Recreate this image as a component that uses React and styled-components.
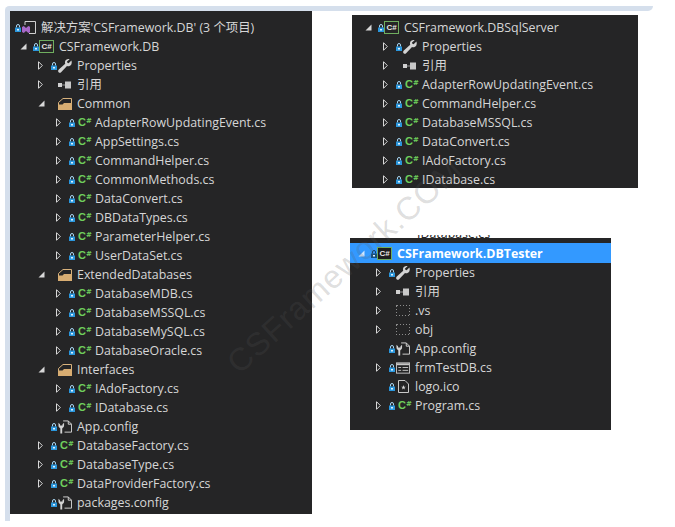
import React from "react";
import styled, { createGlobalStyle } from "styled-components";

const GlobalStyle = createGlobalStyle`
  html, body {
    margin: 0;
    padding: 0;
    background: #ffffff;
  }
`;

const Page = styled.div`
  position: relative;
  width: 675px;
  height: 527px;
  padding: 6px 0 0 5px;
  box-sizing: border-box;
  overflow: hidden;
  font-family: "Open Sans", "Noto Sans CJK SC", sans-serif;
`;

const TopBar = styled.div`
  width: 648px;
  height: 5px;
  background: #d5dfec;
  border-radius: 5px 0 6px 0;
`;

const Body = styled.div`
  display: flex;
  align-items: flex-start;
  height: 510px;
  border-left: 5px solid #d5dfec;
`;

const Watermark = styled.div`
  position: absolute;
  left: 232px;
  top: 347px;
  font-family: "Liberation Sans", sans-serif;
  font-size: 32px;
  line-height: 40px;
  letter-spacing: 1px;
  white-space: nowrap;
  color: rgba(90, 90, 90, 0.21);
  pointer-events: none;
  transform-origin: 0 50%;
  transform: rotate(-42deg);
`;

const Panel = styled.div`
  position: relative;
  width: ${(p) => p.$width}px;
  height: ${(p) => p.$height}px;
  padding-top: ${(p) => p.$top}px;
  box-sizing: border-box;
  background: #252526;
  overflow: hidden;
`;

const RightColumn = styled.div`
  display: flex;
  flex-direction: column;
  align-items: flex-start;
  margin-left: 38px;
`;

const TopPanelWrap = styled.div`
  margin: 4px 0 47px 2px;
`;

const CutLabel = styled.div`
  height: 3px;
  width: 261px;
  padding-left: 67px;
  box-sizing: border-box;
  overflow: hidden;
  font-size: 12.4px;
  line-height: 3px;
  color: #222;
  display: flex;
  align-items: flex-end;
`;

const CutText = styled.span`
  display: block;
  transform: translateY(-3px);
`;

const Row = styled.div`
  display: flex;
  align-items: center;
  height: 19px;
  padding-left: ${(p) => p.$depth * 18 + p.$offset}px;
  background: ${(p) => (p.$selected ? "#3399ff" : "transparent")};
  box-shadow: ${(p) => (p.$selected ? "0 -1px 0 #3399ff" : "none")};
`;

const Expander = styled.span`
  display: flex;
  align-items: center;
  flex: none;
  width: 13px;
  margin-left: -13px;
`;

const LockSlot = styled.span`
  display: flex;
  flex: none;
  width: 7px;
`;

const IconSlot = styled.span`
  display: flex;
  align-items: center;
  justify-content: ${(p) => (p.$wide ? "flex-start" : "center")};
  flex: none;
  width: 14px;
  height: 15px;
`;

const Label = styled.span`
  margin-left: 5px;
  font-size: 12.4px;
  font-weight: ${(p) => (p.$selected ? 700 : 400)};
  line-height: 19px;
  white-space: nowrap;
  color: ${(p) => (p.$selected ? "#ffffff" : "#d6d6d6")};
`;

const CsGlyph = styled.span`
  display: flex;
  align-items: flex-start;
  font-family: "Liberation Sans", sans-serif;
  font-size: 11px;
  font-weight: 700;
  line-height: 11px;
  color: #6fcf5d;
  padding-left: 2px;
`;

const CsHash = styled.span`
  font-family: "DejaVu Sans", sans-serif;
  font-size: 7px;
  line-height: 8px;
`;

const ProjectBox = styled.span`
  display: flex;
  align-items: center;
  justify-content: center;
  flex: none;
  box-sizing: border-box;
  width: 15px;
  height: 13px;
  margin-left: -1px;
  border: 1px solid #6fae5f;
  background: ${(p) => (p.$selected ? "#1e1e1e" : "#252526")};
  font-family: "Liberation Sans", sans-serif;
  font-size: 8px;
  font-weight: 700;
  line-height: 10px;
  color: #e8e8e8;
`;

const Lock = ({ selected }) => (
  <svg width="6" height="8" viewBox="0 0 6 8">
    <path d="M1.5 3.5V2a1.5 1.5 0 0 1 3 0v1.5" fill="none" stroke={selected ? "#14405f" : "#a8d6f2"} strokeWidth="1" />
    <rect x="0" y="3.5" width="6" height="4.5" fill={selected ? "#14507c" : "#2a96dc"} />
    <rect x="2" y="5" width="2" height="1.5" fill="#dff1fc" />
  </svg>
);

const Closed = () => (
  <svg width="5" height="9" viewBox="0 0 5 9">
    <path d="M0.5 0.7L4.3 4.5L0.5 8.3Z" fill="none" stroke="#d8d8d8" strokeWidth="1" />
  </svg>
);

const Open = ({ selected }) => (
  <svg width="7" height="7" viewBox="0 0 7 7">
    <path d="M6.5 0.5V6.5H0.5Z" fill={selected ? "#cfe6ff" : "#d8d8d8"} />
  </svg>
);

const Wrench = () => (
  <svg width="14" height="14" viewBox="0 0 14 14">
    <path
      d="M13.4 1.5L10.6 4.2L9.4 3.8L9 2.6L11.6 0.2C9.6 -0.4 7.4 0.6 7 2.8C6.9 3.5 7 4.2 7.2 4.8L0.8 10.6C-0.1 11.5 0 12.5 0.6 13.2C1.3 13.9 2.4 13.9 3.1 13.2L9 7C10.6 7.5 12.4 7 13.3 5.4C13.9 4.2 13.9 2.7 13.4 1.5Z"
      fill="#d3d3d3"
    />
  </svg>
);

const Refs = () => (
  <svg width="14" height="8" viewBox="0 0 14 8">
    <rect x="0" y="2" width="4" height="4" fill="#d0d0d0" />
    <rect x="4" y="3.5" width="3" height="1" fill="#9a9a9a" />
    <rect x="7" y="0.5" width="6" height="7" fill="#c8c8c8" />
  </svg>
);

const Folder = () => (
  <svg width="14" height="12" viewBox="0 0 14 12">
    <path d="M0.5 4.5L5 0.5H13.5V11.5H0.5Z" fill="#252526" stroke="#d8b27c" strokeWidth="1" />
    <path d="M0 6.5H4.5L6 5H14V12H0Z" fill="#d8ad72" />
  </svg>
);

const GhostFolder = () => (
  <svg width="14" height="11" viewBox="0 0 14 11" shapeRendering="crispEdges">
    <rect x="0.5" y="0.5" width="13" height="10" fill="none" stroke="#8c8c8c" strokeWidth="1" strokeDasharray="1 2" />
  </svg>
);

const ConfigFile = () => (
  <svg width="15" height="14" viewBox="0 0 15 14">
    <path d="M5.5 0.5H11L14.5 4V12.5H7" fill="none" stroke="#d8d8d8" strokeWidth="1" />
    <path d="M11 0.5V4H14.5" fill="none" stroke="#d8d8d8" strokeWidth="1" />
    <path d="M0.5 2.5V5.5C0.5 7 1.5 8 2.5 8.5V14H4.5V8.5C5.5 8 6.5 7 6.5 5.5V2.5L4.8 4V5.5H2.2V4Z" fill="#d3d3d3" />
  </svg>
);

const FormFile = () => (
  <svg width="15" height="12" viewBox="0 0 15 12">
    <rect x="0.5" y="0.5" width="14" height="11" fill="none" stroke="#c8c8c8" strokeWidth="1" />
    <rect x="1" y="1" width="13" height="2" fill="#c8c8c8" />
    <rect x="2.5" y="5" width="3" height="1" fill="#c8c8c8" />
    <rect x="7" y="5" width="6" height="1" fill="#c8c8c8" />
    <rect x="2.5" y="8" width="3" height="1" fill="#c8c8c8" />
    <rect x="7" y="8" width="6" height="1" fill="#c8c8c8" />
  </svg>
);

const IcoFile = () => (
  <svg width="11" height="13" viewBox="0 0 11 13">
    <path d="M0.5 0.5H7L10.5 4V12.5H0.5Z" fill="none" stroke="#c8c8c8" strokeWidth="1" />
    <path d="M5.5 5L6.1 6.7H7.8L6.4 7.8L7 9.5L5.5 8.4L4 9.5L4.6 7.8L3.2 6.7H4.9Z" fill="#d8d8d8" />
  </svg>
);

const SolutionIcon = () => (
  <svg width="14" height="13" viewBox="0 0 14 13">
    <path d="M3 4V0.5H13.5V12.5H7" fill="none" stroke="#d0d0d0" strokeWidth="1" />
    <path d="M0 6L1.8 5L4 7L6.4 5L8 5.8V11.2L6.4 12L4 10L1.8 12L0 11Z" fill="#a868c8" />
  </svg>
);

const CsFile = () => (
  <CsGlyph>
    C<CsHash>#</CsHash>
  </CsGlyph>
);

const fileIcons = {
  wrench: <Wrench />,
  refs: <Refs />,
  folder: <Folder />,
  ghost: <GhostFolder />,
  config: <ConfigFile />,
  form: <FormFile />,
  ico: <IcoFile />,
  sln: <SolutionIcon />,
  cs: <CsFile />,
};

function TreeRow({ item, offset }) {
  const [depth, exp, lock, icon, text, selected] = item;
  return (
    <Row $depth={depth} $offset={offset} $selected={selected}>
      {exp ? <Expander>{exp === "open" ? <Open selected={selected} /> : <Closed />}</Expander> : null}
      <LockSlot>{lock ? <Lock selected={selected} /> : null}</LockSlot>
      {icon === "project" ? (
        <ProjectBox $selected={selected}>C#</ProjectBox>
      ) : (
        <IconSlot $wide={icon === "cs"}>{fileIcons[icon]}</IconSlot>
      )}
      <Label $selected={selected}>{text}</Label>
    </Row>
  );
}

const cs = (depth, text) => [depth, "closed", true, "cs", text];

const mainTree = [
  [0, null, true, "sln", "解决方案'CSFramework.DB' (3 个项目)"],
  [1, "open", true, "project", "CSFramework.DB"],
  [2, "closed", true, "wrench", "Properties"],
  [2, "closed", false, "refs", "引用"],
  [2, "open", false, "folder", "Common"],
  cs(3, "AdapterRowUpdatingEvent.cs"),
  cs(3, "AppSettings.cs"),
  cs(3, "CommandHelper.cs"),
  cs(3, "CommonMethods.cs"),
  cs(3, "DataConvert.cs"),
  cs(3, "DBDataTypes.cs"),
  cs(3, "ParameterHelper.cs"),
  cs(3, "UserDataSet.cs"),
  [2, "open", false, "folder", "ExtendedDatabases"],
  cs(3, "DatabaseMDB.cs"),
  cs(3, "DatabaseMSSQL.cs"),
  cs(3, "DatabaseMySQL.cs"),
  cs(3, "DatabaseOracle.cs"),
  [2, "open", false, "folder", "Interfaces"],
  cs(3, "IAdoFactory.cs"),
  cs(3, "IDatabase.cs"),
  [2, null, true, "config", "App.config"],
  cs(2, "DatabaseFactory.cs"),
  cs(2, "DatabaseType.cs"),
  cs(2, "DataProviderFactory.cs"),
  [2, null, true, "config", "packages.config"],
];

const sqlTree = [
  [1, "open", true, "project", "CSFramework.DBSqlServer"],
  [2, "closed", true, "wrench", "Properties"],
  [2, "closed", false, "refs", "引用"],
  cs(2, "AdapterRowUpdatingEvent.cs"),
  cs(2, "CommandHelper.cs"),
  cs(2, "DatabaseMSSQL.cs"),
  cs(2, "DataConvert.cs"),
  cs(2, "IAdoFactory.cs"),
  cs(2, "IDatabase.cs"),
];

const testerTree = [
  [1, "open", true, "project", "CSFramework.DBTester", true],
  [2, "closed", true, "wrench", "Properties"],
  [2, "closed", false, "refs", "引用"],
  [2, "closed", false, "ghost", ".vs"],
  [2, "closed", false, "ghost", "obj"],
  [2, null, true, "config", "App.config"],
  [2, "closed", true, "form", "frmTestDB.cs"],
  [2, null, true, "ico", "logo.ico"],
  cs(2, "Program.cs"),
];

export default function App() {
  return (
    <>
      <GlobalStyle />
      <Page>
        <TopBar />
        <Body>
          <Panel $width={302} $height={503} $top={7}>
            {mainTree.map((item) => (
              <TreeRow key={item[4]} item={item} offset={5} />
            ))}
          </Panel>
          <RightColumn>
            <TopPanelWrap>
              <Panel $width={286} $height={173} $top={3}>
                {sqlTree.map((item) => (
                  <TreeRow key={item[4]} item={item} offset={8} />
                ))}
              </Panel>
            </TopPanelWrap>
            <CutLabel>
              <CutText>IDatabase.cs</CutText>
            </CutLabel>
            <Panel $width={261} $height={192} $top={6}>
              {testerTree.map((item) => (
                <TreeRow key={item[4]} item={item} offset={3} />
              ))}
            </Panel>
          </RightColumn>
        </Body>
        <Watermark>CSFramework.COM</Watermark>
      </Page>
    </>
  );
}
